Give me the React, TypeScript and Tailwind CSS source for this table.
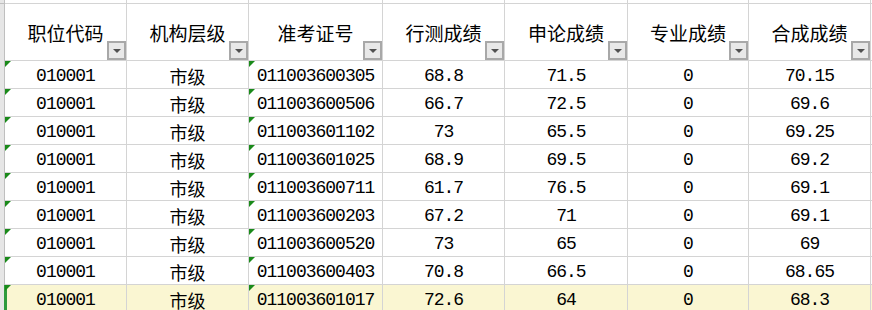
import React from 'react';

interface Row {
  code: string;
  level: string;
  ticket: string;
  xc: string;
  sl: string;
  zy: string;
  total: string;
}

const rows: Row[] = [
  { code: '010001', level: '市级', ticket: '011003600305', xc: '68.8', sl: '71.5', zy: '0', total: '70.15' },
  { code: '010001', level: '市级', ticket: '011003600506', xc: '66.7', sl: '72.5', zy: '0', total: '69.6' },
  { code: '010001', level: '市级', ticket: '011003601102', xc: '73', sl: '65.5', zy: '0', total: '69.25' },
  { code: '010001', level: '市级', ticket: '011003601025', xc: '68.9', sl: '69.5', zy: '0', total: '69.2' },
  { code: '010001', level: '市级', ticket: '011003600711', xc: '61.7', sl: '76.5', zy: '0', total: '69.1' },
  { code: '010001', level: '市级', ticket: '011003600203', xc: '67.2', sl: '71', zy: '0', total: '69.1' },
  { code: '010001', level: '市级', ticket: '011003600520', xc: '73', sl: '65', zy: '0', total: '69' },
  { code: '010001', level: '市级', ticket: '011003600403', xc: '70.8', sl: '66.5', zy: '0', total: '68.65' },
  { code: '010001', level: '市级', ticket: '011003601017', xc: '72.6', sl: '64', zy: '0', total: '68.3' },
];

const headers = ['职位代码', '机构层级', '准考证号', '行测成绩', '申论成绩', '专业成绩', '合成成绩'];

const gridCols = 'grid grid-cols-[5px_122px_122px_134px_122px_123px_121px_122px_1fr]';

// little green "number stored as text" mark
const GreenMark = () => (
  <div className="absolute top-0 left-0 w-0 h-0 border-t-[6px] border-t-[#1a8a1a] border-r-[6px] border-r-transparent" />
);

const FilterButton = () => (
  <div className="absolute right-0 bottom-0 w-[19px] h-[19px] border-2 border-[#a8a8a8] bg-[#e8e8e8] flex items-center justify-center">
    <div className="w-0 h-0 border-l-[4px] border-l-transparent border-r-[4px] border-r-transparent border-t-[4px] border-t-[#505050]" />
  </div>
);

const cell = 'relative border-r border-b border-[#d4d4d4] flex items-end justify-center pb-[2px] leading-[20px]';
const num = "font-['Liberation_Mono','Noto_Sans_CJK_SC',monospace] text-[18px] tracking-[-1px]";
const cjk = "font-['Noto_Sans_CJK_SC',sans-serif] text-[18px]";

export default function App() {
  return (
    <div className="w-[872px] h-[310px] overflow-hidden bg-white text-black">
      {/* top edge */}
      <div className={`${gridCols} h-[4px]`}>
        <div className="bg-[#e6e6e6] border-r border-b border-[#bfbfbf]" />
        {headers.map(h => (
          <div key={h} className="border-r border-b border-[#d4d4d4]" />
        ))}
        <div className="border-b border-[#d4d4d4]" />
      </div>

      {/* header row */}
      <div className={`${gridCols} h-[57px]`}>
        <div className="bg-[#e6e6e6] border-r border-[#bfbfbf]" />
        {headers.map(h => (
          <div key={h} className="relative border-r border-b border-[#d4d4d4] flex items-center justify-center pt-[3px]">
            <span className={`${cjk} text-[19px]`}>{h}</span>
            <FilterButton />
          </div>
        ))}
        <div className="border-b border-[#d4d4d4]" />
      </div>

      {/* data rows */}
      {rows.map((r, i) => {
        const last = i === rows.length - 1;
        const bg = last ? 'bg-[#faf6d2]' : 'bg-white';
        return (
          <div key={r.ticket} className={`${gridCols} h-[28px] ${bg}`}>
            <div className={`bg-[#e6e6e6] border-r ${last ? 'border-[#2e9a3c]' : 'border-[#bfbfbf]'}`} />
            <div className={`${cell} ${last ? 'shadow-[inset_2px_0_0_#2e9a3c]' : ''}`}>
              <GreenMark />
              <span className={num}>{r.code}</span>
            </div>
            <div className={cell}>
              <span className={cjk}>{r.level}</span>
            </div>
            <div className={cell}>
              <GreenMark />
              <span className={num}>{r.ticket}</span>
            </div>
            <div className={cell}>
              <span className={num}>{r.xc}</span>
            </div>
            <div className={cell}>
              <span className={num}>{r.sl}</span>
            </div>
            <div className={cell}>
              <span className={num}>{r.zy}</span>
            </div>
            <div className={cell}>
              <span className={num}>{r.total}</span>
            </div>
            <div className="border-b border-[#d4d4d4]" />
          </div>
        );
      })}
    </div>
  );
}
